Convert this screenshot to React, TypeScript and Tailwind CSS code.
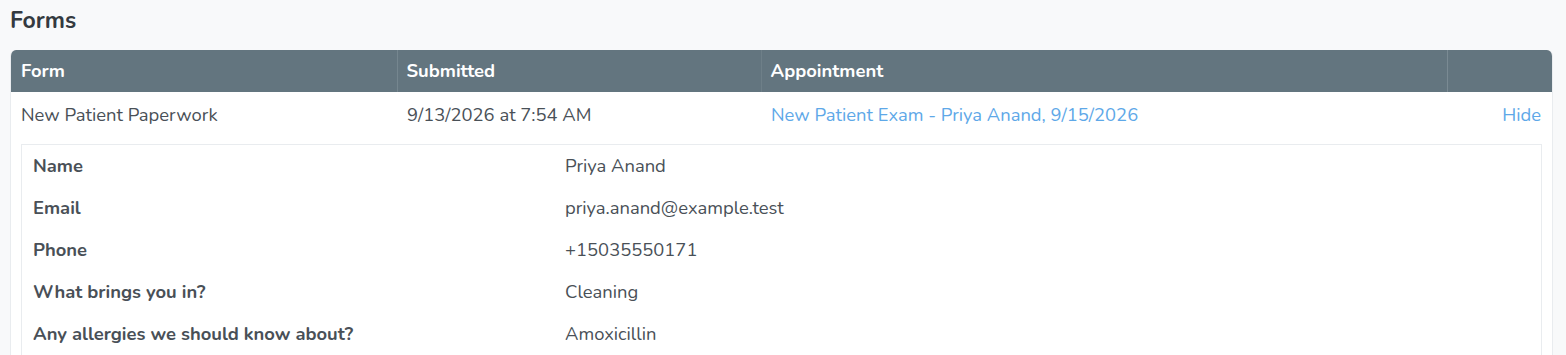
import React from 'react';

const fields = [
  { label: 'Name', value: 'Priya Anand' },
  { label: 'Email', value: 'priya.anand@example.test' },
  { label: 'Phone', value: '+15035550171' },
  { label: 'What brings you in?', value: 'Cleaning' },
  { label: 'Any allergies we should know about?', value: 'Amoxicillin' },
];

export default function App() {
  return (
    <div
      className="min-h-screen bg-[#f8f9fa] pl-[10px] pr-[13px] pt-[6px] text-[18.4px] text-[#495057]"
      style={{ fontFamily: "Nunito, 'Open Sans', sans-serif" }}
    >
      <h2 className="mb-[15px] text-[23px] font-bold leading-[29px] text-[#343a40]">Forms</h2>

      <div className="overflow-hidden rounded-t-[6px] border-x border-[#e9ecef] bg-white">
        <table className="w-full table-fixed border-collapse">
          <colgroup>
            <col className="w-[386px]" />
            <col className="w-[364px]" />
            <col className="w-[686px]" />
            <col />
          </colgroup>
          <thead>
            <tr className="h-[42px] bg-[#63757f] text-left font-extrabold text-white">
              <th className="px-[10px]">Form</th>
              <th className="border-l border-[#75868f] px-[9px]">Submitted</th>
              <th className="border-l border-[#6e7f88] px-[9px]">Appointment</th>
              <th className="border-l border-[#7a8a93]"></th>
            </tr>
          </thead>
          <tbody>
            <tr className="h-[46px] leading-[24px]">
              <td className="px-[10px]">New Patient Paperwork</td>
              <td className="px-[10px]">9/13/2026 at 7:54 AM</td>
              <td className="px-[10px]">
                <a className="text-[#5ea8e8]" href="#">
                  New Patient Exam - Priya Anand, 9/15/2026
                </a>
              </td>
              <td className="px-[11px] text-right">
                <a className="text-[#5ea8e8]" href="#">Hide</a>
              </td>
            </tr>
            <tr>
              <td colSpan={4} className="px-[10px] pt-[6px]">
                <div className="border border-[#e9ecef]">
                  {fields.map((f) => (
                    <div key={f.label} className="flex h-[42px] items-center">
                      <div className="w-[532px] shrink-0 px-[11px] font-bold">{f.label}</div>
                      <div className="px-[11px]">{f.value}</div>
                    </div>
                  ))}
                </div>
              </td>
            </tr>
          </tbody>
        </table>
      </div>
    </div>
  );
}
